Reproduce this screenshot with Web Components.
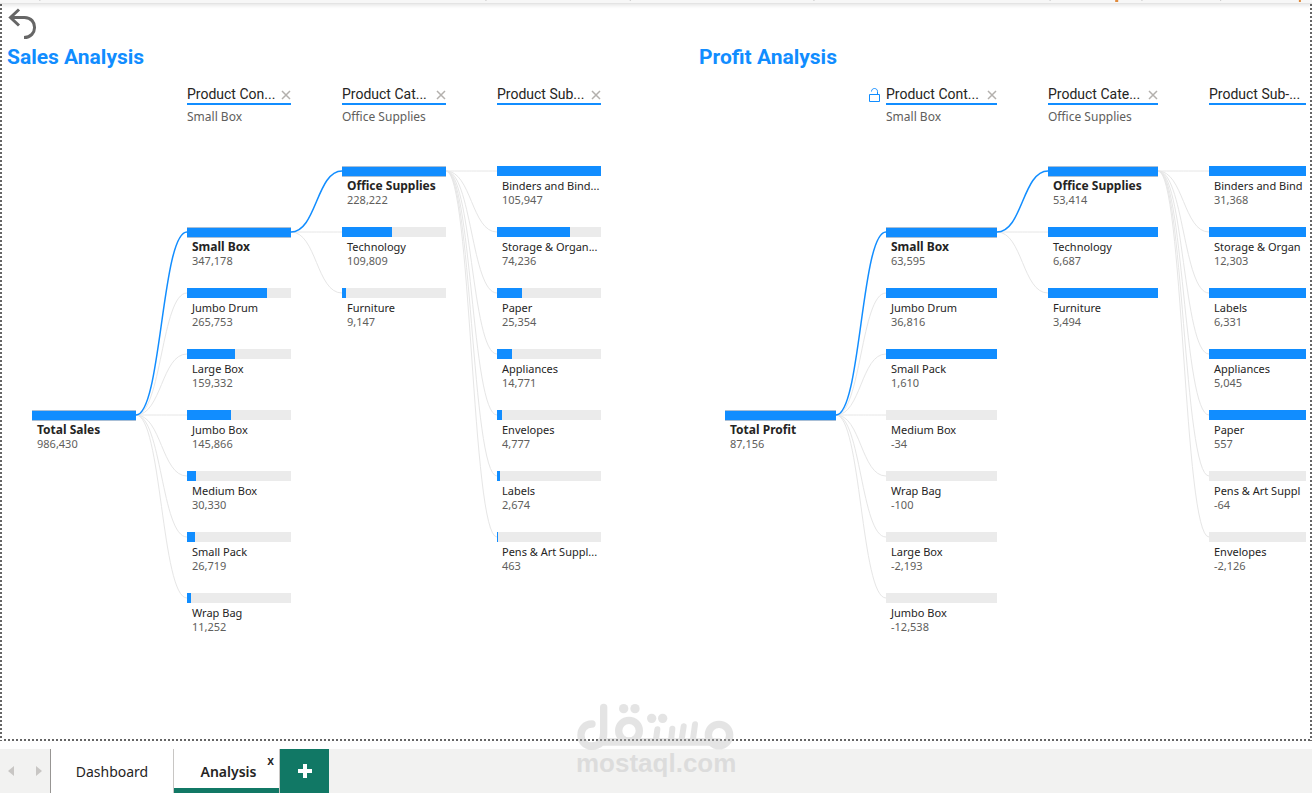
<!DOCTYPE html>
<html lang="en">
<head>
<meta charset="utf-8">
<title>Analysis</title>
<style>
  body { margin: 0; background: #fff; font-family: "Noto Sans", "Open Sans", sans-serif; }
</style>
</head>
<body>
<report-app></report-app>

<script>
const define = (name, html, setup) => {
  const template = document.createElement('template');
  template.innerHTML = html;
  customElements.define(name, class extends HTMLElement {
    constructor() {
      super();
      this.attachShadow({ mode: 'open' }).append(template.content.cloneNode(true));
    }
    connectedCallback() { if (setup) setup(this, this.shadowRoot); }
  });
};

/* One bar of the tree with its label and value. */
define('tree-node', `
  <style>
    :host { display: block; position: relative; height: 61px; font-size: 11px; line-height: 14px; color: #252423; }
    .bar { height: 10px; margin-bottom: 3px; background: #ebebeb; }
    .fill { height: 100%; background: #118dff; }
    :host([selected]) .bar { height: 11px; margin-bottom: 2px; box-sizing: border-box; border: 1px solid #a9bfd6; border-width: 1px 0; }
    :host([selected]) .name { font-weight: 700; font-size: 12px; }
    .name, .value { padding-left: 5px; white-space: nowrap; }
    .value { color: #605e5c; }
  </style>
  <div class="bar"><div class="fill"></div></div>
  <div class="name"><slot></slot></div>
  <div class="value"></div>`,
  (el, root) => {
    root.querySelector('.fill').style.width = (el.getAttribute('fill') || 100) + '%';
    root.querySelector('.value').textContent = el.getAttribute('value');
  });

/* A column of the tree: its heading, then its nodes. */
define('tree-level', `
  <style>
    :host { display: block; min-width: 0; position: relative; }
    header { height: 82px; }
    .head { display: flex; align-items: center; justify-content: space-between; height: 19px;
      border-bottom: 2px solid #118dff; font: 14px/18px Roboto, sans-serif; color: #252423; white-space: nowrap; }
    .sub { margin-top: 4px; font-size: 12px; line-height: 16px; color: #605e5c; }
    button { border: 0; padding: 0; margin: 3px 0 0; background: none; width: 10px; height: 10px; display: flex; }
    .lock { position: absolute; left: -18px; top: 0; width: 13px; height: 16px; }
    :host([plain]) .head, :host([plain]) .sub, :host(:not([lock])) .lock, :host([open-end]) .close { display: none; }
  </style>
  <header>
    <div class="head"><span class="title"></span>
      <button class="close" aria-label="Remove level"><svg width="10" height="10"><path d="M1 1l8 8M9 1l-8 8" stroke="#b3b0ad" stroke-width="1.5"/></svg></button>
    </div>
    <div class="sub"></div>
    <button class="lock" aria-label="Lock level"><svg width="13" height="16" fill="none" stroke="#118dff"><path d="M1.500 7.500h10v7h-10zM3.500 4.500c0-4 6-4 6 0v3"/></svg></button>
  </header>
  <div class="nodes"><slot></slot></div>`,
  (el, root) => {
    root.querySelector('.title').textContent = el.getAttribute('heading') || '';
    root.querySelector('.sub').textContent = el.getAttribute('choice') || '';
    root.querySelector('.nodes').style.paddingTop = 61 * (el.getAttribute('skip') || 0) + 'px';
  });

/* Curves from one row to a range of rows in the next column. */
define('tree-links', `
  <style>
    :host { display: block; min-width: 0; padding-top: 82px; }
    svg { display: block; width: 100%; height: 488px; overflow: visible; }
    path { fill: none; stroke: #e6e6e6; vector-effect: non-scaling-stroke; }
    path.on { stroke: #118dff; stroke-width: 1.5px; }
  </style>
  <svg viewBox="0 0 50 488" preserveAspectRatio="none" aria-hidden="true"></svg>`,
  (el, root) => {
    const n = a => +el.getAttribute(a), y = r => r * 61 + 5;
    let out = '';
    for (let r = n('last'); r >= n('first'); r--) {
      const on = el.hasAttribute('active') && r === n('active');
      out += `<path class="${on ? 'on' : ''}" d="M0 ${y(n('from'))}C25 ${y(n('from'))} 25 ${y(r)} 50 ${y(r)}"/>`;
    }
    root.querySelector('svg').innerHTML = out;
  });

define('decomposition-tree', `
  <style>
    :host { display: block; min-width: 0; overflow: hidden; }
    h2 { margin: 0 0 14px; font: 700 21px/26px Roboto, sans-serif; color: #118dff; }
    .grid { display: grid; grid-template-columns: var(--columns); padding-left: var(--start); margin-right: var(--end); }
  </style>
  <h2></h2>
  <div class="grid"><slot></slot></div>`,
  (el, root) => { root.querySelector('h2').textContent = el.getAttribute('heading'); });

define('ribbon-edge', `
  <style>
    :host { display: block; height: 3px; background: #f7f7f7; border-bottom: 1px solid #e4e4e4; box-shadow: 0 1px 4px #0002; position: relative; }
    svg { display: block; width: 100%; height: 3px; }
  </style>
  <svg aria-hidden="true" fill="#c8c8c8">
    <rect x="3%" width="1" height="1"/><rect x="37%" width="1" height="1"/><rect x="48%" width="1" height="1"/><rect x="62%" width="1" height="1"/>
    <rect x="80%" width="1" height="1"/><rect x="87%" width="1" height="1"/><rect x="93%" width="1" height="1"/>
    <rect x="85%" width="3" height="2" fill="#e08a3c"/><rect x="99%" width="2" height="2" fill="#e08a3c"/>
  </svg>`);

define('report-canvas', `
  <style>
    :host { display: block; flex: 1; padding: 4px 6px 20px 7px;
      --v: repeating-linear-gradient(#666 0 2px, #fff 2px 4px);
      background: var(--v) 0 0 / 2px 100% no-repeat, var(--v) 100% 0 / 2px 100% no-repeat,
        repeating-linear-gradient(90deg, #666 0 2px, #fff 2px 4px) 0 100% / 100% 2px no-repeat; }
    .back { display: block; border: 0; padding: 0; margin: 0 0 4px 1px; width: 30px; height: 32px; background: none; }
    .back svg { display: block; }
    .trees { display: grid; grid-template-columns: minmax(0, 692fr) minmax(0, 607fr); }
  </style>
  <button class="back" aria-label="Back"><svg width="30" height="32" fill="none" stroke="#666" stroke-width="3"><path d="M11 1.500L2.500 9.500l8.500 8M3 9.500h13.500C30 9.500 30 29.500 16 29.500"/></svg></button>
  <div class="trees"><slot></slot></div>`);

define('page-tabs', `
  <style>
    :host { display: flex; height: 44px; margin-top: 8px; background: #f2f2f1; font-size: 14px; color: #252423; }
    .nav { display: flex; box-sizing: border-box; width: 51px; padding: 0 7px; border-right: 1px solid #979593; align-items: center; justify-content: space-between; }
    button { font: inherit; color: inherit; border: 0; padding: 0; background: none; }
    .tab { width: 123px; background: #fff; border-right: 1px solid #c8c6c4; }
    .active { position: relative; display: flex; width: 105px; background: #fff; border-right: 1px solid #c8c6c4; box-shadow: inset 0 -5px #117865; }
    .active .label { flex: 1; padding-left: 4px; font-weight: 600; }
    .active .close { position: absolute; right: 5px; top: 4px; font-size: 12px; line-height: 16px; font-weight: 600; }
    .add { display: grid; place-items: center; width: 49px; background: #117865; }
  </style>
  <div class="nav">
    <button aria-label="Previous page"><svg width="8" height="12"><path d="M7 1v10L1 6z" fill="#c8c6c4"/></svg></button>
    <button aria-label="Next page"><svg width="8" height="12"><path d="M1 1v10l6-5z" fill="#c8c6c4"/></svg></button>
  </div>
  <button class="tab">Dashboard</button>
  <div class="active"><button class="label">Analysis</button><button class="close" aria-label="Close page">x</button></div>
  <button class="add" aria-label="New page"><svg width="14" height="14"><path d="M7 0v14M0 7h14" stroke="#fff" stroke-width="4"/></svg></button>`);

define('site-watermark', `
  <style>
    :host { position: absolute; left: calc(50% - 80px); bottom: 18px; width: 160px; opacity: .38; color: #bbb; pointer-events: none; }
    svg { display: block; }
    .site { font: 700 26px/24px "Liberation Sans", sans-serif; white-space: nowrap; }
  </style>
  <svg width="159" height="48" viewBox="108 40 477 144" fill="none" stroke="currentColor" stroke-linecap="round" role="img" aria-label="Mostaql logo">
    <g stroke-width="22">
      <path d="M156 103C112 103 112 169 155 169C180 169 191 155 191 130V53M185 157H537"/>
      <circle cx="267" cy="123" r="31"/><circle cx="537" cy="136" r="32"/>
    </g>
    <path d="M352 119l-5 38M397 117l-4 38M431 110l-7 46M465 104l-7 52" stroke-width="18"/>
    <g fill="currentColor" stroke="none"><circle cx="251" cy="57" r="14"/><circle cx="285" cy="57" r="14"/><circle cx="335" cy="86" r="14"/><circle cx="368" cy="86" r="14"/></g>
  </svg>
  <div class="site">mostaql.com</div>`);

define('report-app', `
  <style>
    :host { display: flex; flex-direction: column; min-height: 100vh; position: relative; overflow: hidden; }
    .sales { --columns: 104fr 51fr 104fr 51fr 104fr 51fr 104fr; --start: 25px; --end: 98px; }
    .profit { --columns: 111fr 50fr 111fr 51fr 110fr 51fr 110fr; --start: 26px; --end: -13px; }
  </style>
  <ribbon-edge></ribbon-edge>
  <report-canvas>
    <decomposition-tree class="sales" heading="Sales Analysis">
      <tree-level plain skip="4"><tree-node selected value="986,430">Total Sales</tree-node></tree-level>
      <tree-links from="4" first="1" last="7" active="1"></tree-links>
      <tree-level skip="1" heading="Product Con..." choice="Small Box">
        <tree-node selected value="347,178">Small Box</tree-node>
        <tree-node fill="76.5" value="265,753">Jumbo Drum</tree-node>
        <tree-node fill="46" value="159,332">Large Box</tree-node>
        <tree-node fill="42" value="145,866">Jumbo Box</tree-node>
        <tree-node fill="9" value="30,330">Medium Box</tree-node>
        <tree-node fill="8" value="26,719">Small Pack</tree-node>
        <tree-node fill="3.5" value="11,252">Wrap Bag</tree-node>
      </tree-level>
      <tree-links from="1" first="0" last="2" active="0"></tree-links>
      <tree-level heading="Product Cat..." choice="Office Supplies">
        <tree-node selected value="228,222">Office Supplies</tree-node>
        <tree-node fill="48" value="109,809">Technology</tree-node>
        <tree-node fill="4" value="9,147">Furniture</tree-node>
      </tree-level>
      <tree-links from="0" first="0" last="6"></tree-links>
      <tree-level heading="Product Sub...">
        <tree-node value="105,947">Binders and Bind...</tree-node>
        <tree-node fill="70" value="74,236">Storage &amp; Organ...</tree-node>
        <tree-node fill="24" value="25,354">Paper</tree-node>
        <tree-node fill="14" value="14,771">Appliances</tree-node>
        <tree-node fill="4.5" value="4,777">Envelopes</tree-node>
        <tree-node fill="2.5" value="2,674">Labels</tree-node>
        <tree-node fill="1" value="463">Pens &amp; Art Suppl...</tree-node>
      </tree-level>
    </decomposition-tree>
    <decomposition-tree class="profit" heading="Profit Analysis">
      <tree-level plain skip="4"><tree-node selected value="87,156">Total Profit</tree-node></tree-level>
      <tree-links from="4" first="1" last="7" active="1"></tree-links>
      <tree-level lock skip="1" heading="Product Cont..." choice="Small Box">
        <tree-node selected value="63,595">Small Box</tree-node>
        <tree-node value="36,816">Jumbo Drum</tree-node>
        <tree-node value="1,610">Small Pack</tree-node>
        <tree-node fill="0" value="-34">Medium Box</tree-node>
        <tree-node fill="0" value="-100">Wrap Bag</tree-node>
        <tree-node fill="0" value="-2,193">Large Box</tree-node>
        <tree-node fill="0" value="-12,538">Jumbo Box</tree-node>
      </tree-level>
      <tree-links from="1" first="0" last="2" active="0"></tree-links>
      <tree-level heading="Product Cate..." choice="Office Supplies">
        <tree-node selected value="53,414">Office Supplies</tree-node>
        <tree-node value="6,687">Technology</tree-node>
        <tree-node value="3,494">Furniture</tree-node>
      </tree-level>
      <tree-links from="0" first="0" last="6"></tree-links>
      <tree-level open-end heading="Product Sub-...">
        <tree-node value="31,368">Binders and Bind</tree-node>
        <tree-node value="12,303">Storage &amp; Organ</tree-node>
        <tree-node value="6,331">Labels</tree-node>
        <tree-node value="5,045">Appliances</tree-node>
        <tree-node value="557">Paper</tree-node>
        <tree-node fill="0" value="-64">Pens &amp; Art Suppl</tree-node>
        <tree-node fill="0" value="-2,126">Envelopes</tree-node>
      </tree-level>
    </decomposition-tree>
  </report-canvas>
  <page-tabs></page-tabs>
  <site-watermark></site-watermark>`);
</script>
</body>
</html>
